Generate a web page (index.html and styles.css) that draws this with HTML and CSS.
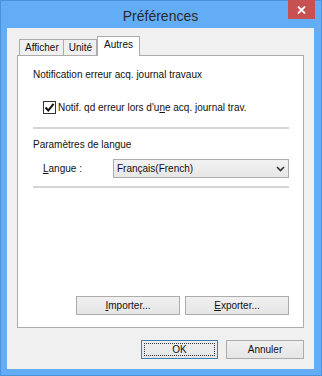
FILE: index.html
```html
<!DOCTYPE html>
<html>
<head lang="fr">
    <meta charset="UTF-8">
    <title>Préférences</title>
    <link rel="stylesheet" href="styles.css">
</head>
<body>
    <div class="window">
        <div class="titlebar">
            <span></span>
            <span class="title">Préférences</span>
            <span class="close">
                <svg width="9" height="8" viewBox="0 0 9 8"><path d="M1 0.5 L8 7.5 M8 0.5 L1 7.5" stroke="#fff" stroke-width="1.8"/></svg>
            </span>
        </div>
        <div class="client">
            <div class="tab-control">
                <ul class="tablist">
                    <li class="tab">Afficher</li>
                    <li class="tab">Unité</li>
                    <li class="tab active">Autres</li>
                </ul>
                <div class="tabpanel">
                    <div class="group-title">Notification erreur acq. journal travaux</div>
                    <div class="check-row">
                        <span class="checkbox">
                            <svg width="11" height="11" viewBox="0 0 11 11"><path d="M1.5 5.5 L4.3 8.5 L9.5 1.8" fill="none" stroke="#111" stroke-width="2"/></svg>
                        </span>
                        <span>Notif. qd erreur lors d'u<u>n</u>e acq. journal trav.</span>
                    </div>
                    <hr class="sep">
                    <div class="group-title">Paramètres de langue</div>
                    <div class="field">
                        <span class="field-label"><u>L</u>angue :</span>
                        <div class="select">
                            <span>Français(French)</span>
                            <svg width="9" height="6" viewBox="0 0 9 6"><path d="M1 1 L4.5 4.5 L8 1" fill="none" stroke="#333" stroke-width="1.6"/></svg>
                        </div>
                    </div>
                    <hr class="sep">
                    <div class="io-buttons">
                        <button class="btn wide"><u>I</u>mporter...</button>
                        <button class="btn wide"><u>E</u>xporter...</button>
                    </div>
                </div>
            </div>
            <div class="dialog-buttons">
                <button class="btn default"><span class="focus">OK</span></button>
                <button class="btn">Annuler</button>
            </div>
        </div>
    </div>
</body>
</html>
```

FILE: styles.css
```css
html, body {
    margin: 0;
    padding: 0;
}

body {
    width: 322px;
    height: 376px;
    font-family: "Liberation Sans", Arial, sans-serif;
    font-size: 10px;
    color: #111;
    white-space: nowrap;
}

.window {
    box-sizing: border-box;
    width: 322px;
    height: 376px;
    background-color: #63adf7;
    border: 1px solid #4a92dd;
    padding: 0 7px 6px 6px;
    display: flex;
    flex-direction: column;
}

.titlebar {
    height: 27px;
    display: grid;
    grid-template-columns: 1fr auto 1fr;
    align-items: start;
}

.titlebar .title {
    font-size: 14px;
    line-height: 30px;
    color: #2a2a2a;
}

.titlebar .close {
    justify-self: end;
    margin-top: -1px;
    margin-right: -1px;
    width: 27px;
    height: 19px;
    background-color: #c75050;
    display: flex;
    align-items: center;
    justify-content: center;
}

.client {
    flex: 1;
    background-color: #f0f0f0;
    padding: 8px 10px 0 10px;
    display: flex;
    flex-direction: column;
}

.tablist {
    margin: 0;
    padding: 0 0 0 2px;
    list-style: none;
    display: flex;
    align-items: flex-end;
    height: 19px;
    position: relative;
    z-index: 1;
}

.tablist .tab {
    box-sizing: border-box;
    height: 16px;
    line-height: 15px;
    padding: 0 4px 0 5px;
    border: 1px solid #acacac;
    border-bottom: none;
    background-color: #f0f0f0;
    margin-right: -1px;
}

.tablist .tab.active {
    height: 20px;
    margin-bottom: -1px;
    margin-left: 1px;
    line-height: 16px;
    padding: 0 6px;
    background-color: #fff;
}

.tabpanel {
    box-sizing: border-box;
    height: 273px;
    background-color: #fff;
    border: 1px solid #acacac;
    padding: 11px 14px 12px 15px;
    display: flex;
    flex-direction: column;
}

.group-title {
    line-height: 16px;
}

.check-row {
    display: flex;
    align-items: center;
    margin: 17px 0 0 10px;
    height: 14px;
}

.checkbox {
    box-sizing: border-box;
    width: 13px;
    height: 13px;
    border: 1px solid #333;
    background-color: #fff;
    margin-right: 2px;
    display: flex;
    align-items: center;
    justify-content: center;
}

.sep {
    border: none;
    border-top: 2px solid #d5d5d5;
    margin: 13px 0 8px 0;
    height: 0;
}

.field {
    display: flex;
    align-items: center;
    margin: 6px 0 0 10px;
}

.field-label {
    width: 70px;
}

.select {
    box-sizing: border-box;
    flex: 1;
    height: 19px;
    border: 1px solid #acacac;
    background: linear-gradient(#f2f2f2, #e6e6e6);
    display: flex;
    align-items: center;
    justify-content: space-between;
    padding: 0 3px 0 3px;
}

.field + .sep {
    margin-top: 8px;
}

.io-buttons {
    margin-top: auto;
    display: flex;
    justify-content: flex-end;
    gap: 5px;
}

.btn {
    box-sizing: border-box;
    height: 19px;
    width: 78px;
    padding: 0;
    font-family: "Liberation Sans", Arial, sans-serif;
    font-size: 10px;
    color: #111;
    border: 1px solid #acacac;
    background: linear-gradient(#f0f0f0, #e5e5e5);
}

.btn.wide {
    width: 104px;
}

.dialog-buttons {
    display: flex;
    justify-content: flex-end;
    gap: 8px;
    margin-top: 12px;
}

.btn.default {
    width: 77px;
    border-color: #3c7fb1;
    padding: 2px;
}

.btn.default .focus {
    display: block;
    height: 100%;
    box-sizing: border-box;
    border: 1px dotted #333;
    line-height: 12px;
}
```
